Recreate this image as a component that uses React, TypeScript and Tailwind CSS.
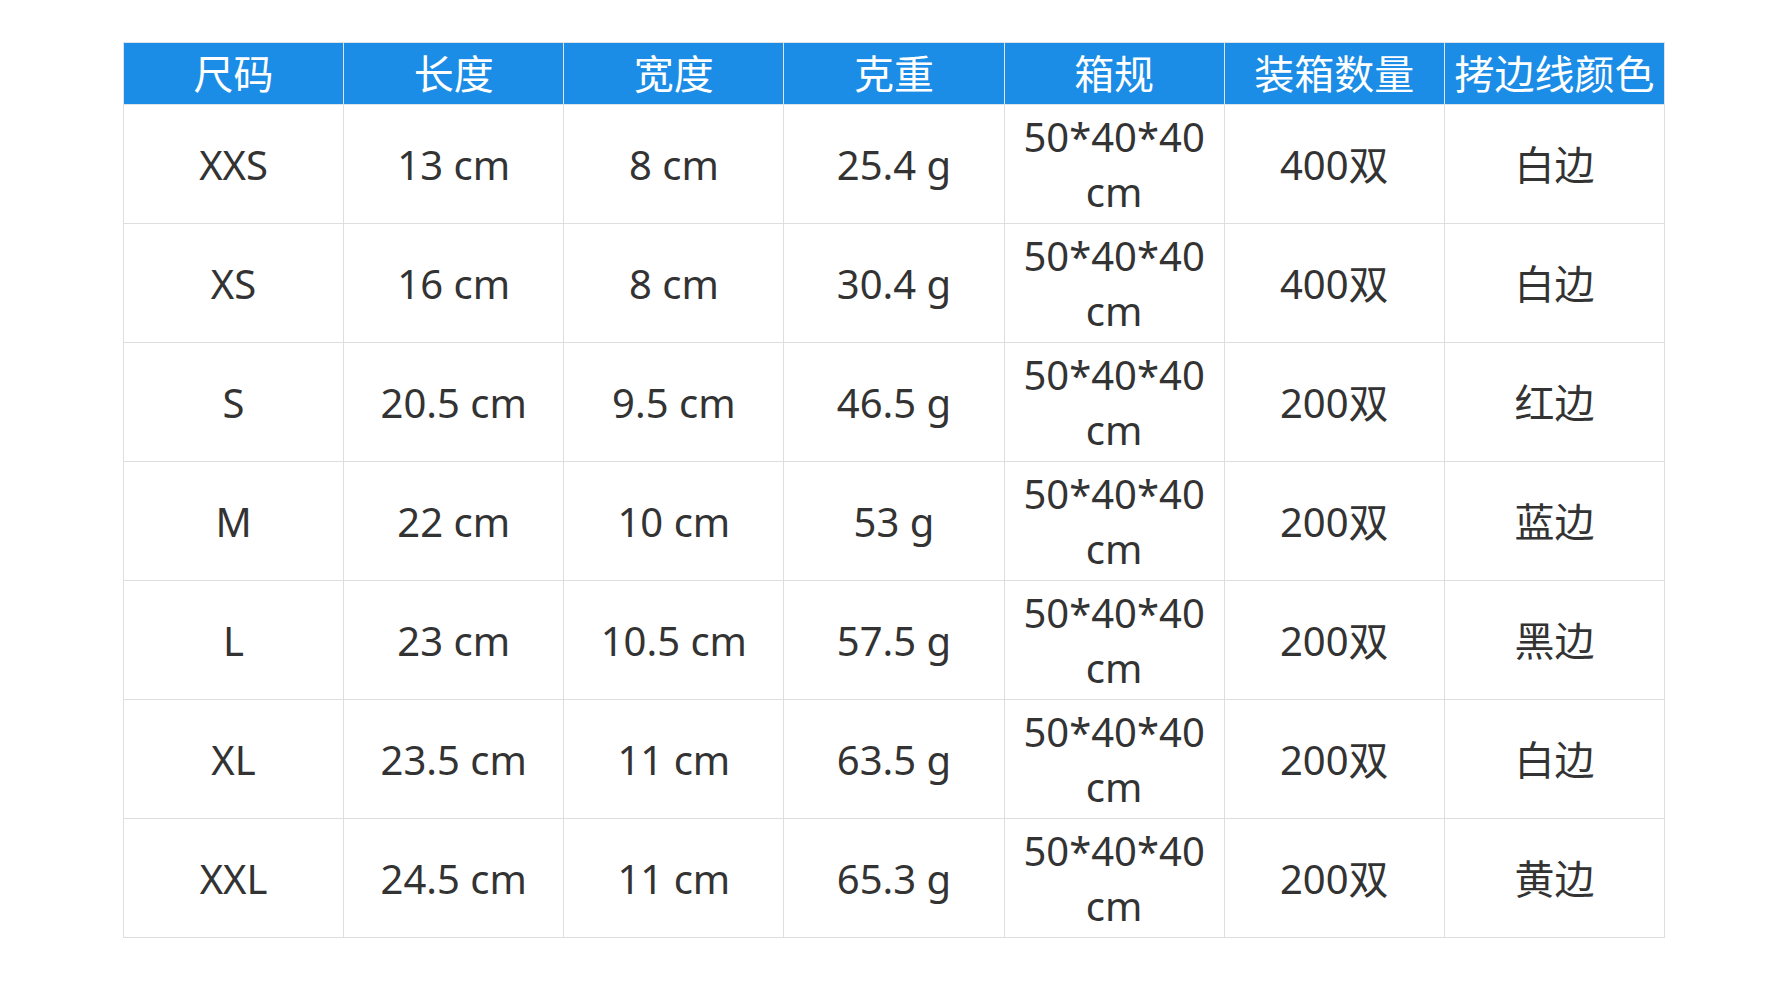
const headers = ['尺码', '长度', '宽度', '克重', '箱规', '装箱数量', '拷边线颜色']

const rows = [
  ['XXS', '13 cm', '8 cm', '25.4 g', '50*40*40 cm', '400双', '白边'],
  ['XS', '16 cm', '8 cm', '30.4 g', '50*40*40 cm', '400双', '白边'],
  ['S', '20.5 cm', '9.5 cm', '46.5 g', '50*40*40 cm', '200双', '红边'],
  ['M', '22 cm', '10 cm', '53 g', '50*40*40 cm', '200双', '蓝边'],
  ['L', '23 cm', '10.5 cm', '57.5 g', '50*40*40 cm', '200双', '黑边'],
  ['XL', '23.5 cm', '11 cm', '63.5 g', '50*40*40 cm', '200双', '白边'],
  ['XXL', '24.5 cm', '11 cm', '65.3 g', '50*40*40 cm', '200双', '黄边'],
]

export default function App() {
  return (
    <div
      className="min-h-screen bg-white pl-[123px] pt-[42px]"
      style={{ fontFamily: '"Noto Sans", "Noto Sans CJK SC", sans-serif' }}
    >
      <table className="w-[1542px] table-fixed border-collapse text-center text-[40px] leading-[55px]">
        <thead>
          <tr className="bg-[#1b8de6] text-white">
            {headers.map((h) => (
              <th
                key={h}
                className="h-[62px] whitespace-nowrap border border-[#dde3ea] px-0 font-normal"
              >
                {h}
              </th>
            ))}
          </tr>
        </thead>
        <tbody>
          {rows.map((row) => (
            <tr key={row[0]} className="text-[#333]">
              {row.map((cell, i) => (
                <td key={i} className="h-[119px] border border-[#dedede] px-2 py-0 align-middle">
                  {cell}
                </td>
              ))}
            </tr>
          ))}
        </tbody>
      </table>
    </div>
  )
}
